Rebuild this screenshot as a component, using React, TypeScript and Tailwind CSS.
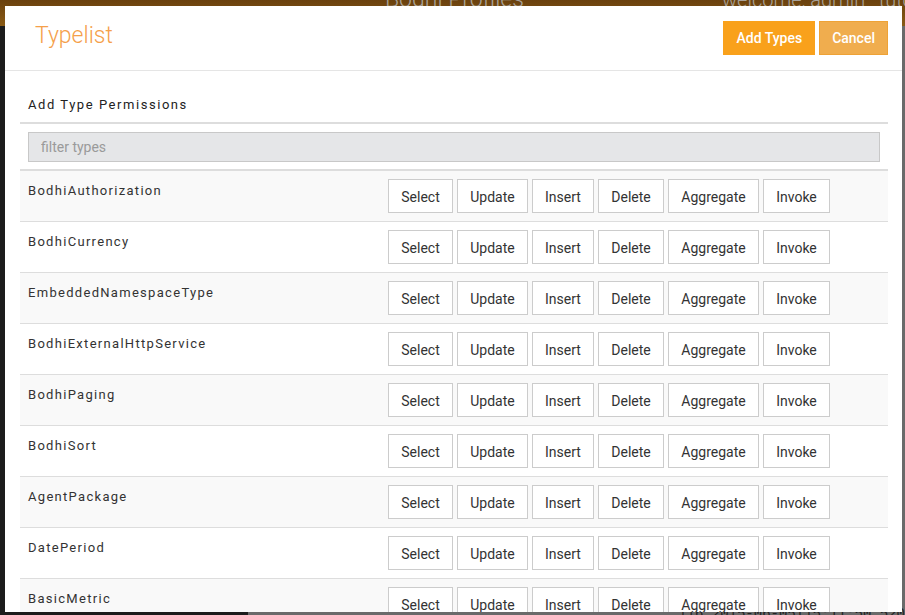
import { FC } from "react";

const TYPES = [
  "BodhiAuthorization",
  "BodhiCurrency",
  "EmbeddedNamespaceType",
  "BodhiExternalHttpService",
  "BodhiPaging",
  "BodhiSort",
  "AgentPackage",
  "DatePeriod",
  "BasicMetric",
  "BodhiRange",
];

const PERMISSIONS = [
  { label: "Select", w: "w-[65px]" },
  { label: "Update", w: "w-[71px]" },
  { label: "Insert", w: "w-[62px]" },
  { label: "Delete", w: "w-[66px]" },
  { label: "Aggregate", w: "w-[91px]" },
  { label: "Invoke", w: "w-[67px]" },
];

const TypeRow: FC<{ name: string; striped: boolean }> = ({ name, striped }) => (
  <div
    className={`flex border-t border-[#dddddd] h-[51px] ${striped ? "bg-[#f9f9f9]" : "bg-white"}`}
  >
    <div className="w-[360px] px-2 pt-[10px] text-[13px] leading-5 tracking-[1.3px] text-[#333]">
      {name}
    </div>
    <div className="flex gap-1 px-2 pt-2">
      {PERMISSIONS.map((p) => (
        <button
          key={p.label}
          className={`${p.w} h-[34px] pt-[1px] border border-[#cccccc] bg-white text-[14px] text-[#333] leading-5 text-center`}
        >
          {p.label}
        </button>
      ))}
    </div>
  </div>
);

const App: FC = () => {
  return (
    <div className="relative w-[905px] h-[615px] overflow-hidden bg-[#1c1c1c] font-['Roboto',sans-serif]">
      {/* page behind the dialog */}
      <div className="h-[26px] bg-gradient-to-b from-[#6a410e] to-[#8a5b15] flex items-start text-[#a8a29a] overflow-hidden">
        <div className="w-[722px] shrink-0 pl-[385px]">
          <span className="block -mt-[17px] text-[23px] font-light whitespace-nowrap">Bodhi Profiles</span>
        </div>
        <span className="block -mt-[15px] text-[20px] font-light whitespace-nowrap">
          welcome, admin _tutorial
        </span>
      </div>
      <div className="flex h-[589px]">
        <div className="w-[257px] bg-[#1c1c1c]" />
        <div className="flex-1 bg-[#6a6a6a] flex flex-col justify-end">
          <div className="pl-[430px] -mb-[10px] font-['Liberation_Mono',monospace] text-[14px] text-[#222] whitespace-nowrap">
            116 2015-06-05T15:11:50.520
          </div>
        </div>
      </div>

      {/* dialog */}
      <div className="absolute left-[5px] top-[6px] w-[897px] h-[606px] bg-white overflow-hidden">
        <div className="h-[65px] flex items-center justify-between pl-[30px] pr-[14px] border-b border-[#e5e5e5]">
          <h1 className="text-[23px] font-light text-[#f5a04a] -mt-[3px]">Typelist</h1>
          <div className="flex gap-1 -mt-[1px]">
            <button className="h-[34px] px-[13px] pt-[2px] bg-[#f9a11b] text-white text-[14px] font-medium">
              Add Types
            </button>
            <button className="h-[34px] px-3 pt-[2px] bg-[#f0ad4e] border border-[#eea236] text-white text-[14px] font-medium">
              Cancel
            </button>
          </div>
        </div>

        <div className="pl-[15px] pr-[14px]">
          <div className="px-2 pt-[24px] pb-[7px] border-b-2 border-[#dddddd] text-[13px] leading-5 tracking-[1.55px] text-[#222]">
            Add Type Permissions
          </div>
          <div className="px-2 pt-2 pb-[7px]">
            <input
              placeholder="filter types"
              className="w-full h-[30px] px-3 bg-[#e5e6e8] border border-[#c8c8c8] text-[14px] placeholder:text-[#9a9a9a] outline-none"
            />
          </div>
          <div className="border-t border-[#dddddd]">
            {TYPES.map((t, i) => (
              <TypeRow key={t} name={t} striped={i % 2 === 0} />
            ))}
          </div>
        </div>
      </div>
    </div>
  );
};

export default App;
